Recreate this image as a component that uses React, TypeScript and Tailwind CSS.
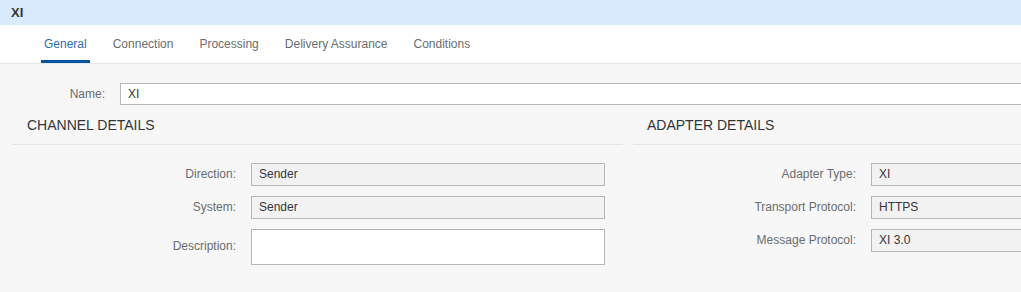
import React from "react";

const tabs = ["General", "Connection", "Processing", "Delivery Assurance", "Conditions"];

const channelRows = [
  { label: "Direction:", value: "Sender" },
  { label: "System:", value: "Sender" },
];

const adapterRows = [
  { label: "Adapter Type:", value: "XI" },
  { label: "Transport Protocol:", value: "HTTPS" },
  { label: "Message Protocol:", value: "XI 3.0" },
];

const Field: React.FC<{ label: string; value?: string; tall?: boolean; readOnly?: boolean }> = ({
  label,
  value,
  tall,
  readOnly = true,
}) => {
  return (
    <div className="flex items-start">
      <div
        className={`w-[223px] shrink-0 text-right text-[12px] text-[#6a6d70] ${
          tall ? "leading-[35px]" : "leading-[23px]"
        }`}
      >
        {label}
      </div>
      <div
        className={`ml-[15px] w-[354px] shrink-0 border border-[#b4b8bc] px-[7px] text-[12px] text-[#32363a] ${
          tall ? "h-[36px]" : "h-[23px] leading-[21px]"
        } ${readOnly ? "bg-[#f2f2f2]" : "bg-white"}`}
      >
        {value}
      </div>
    </div>
  );
};

const Section: React.FC<{ title: string; children: React.ReactNode; className?: string }> = ({
  title,
  children,
  className,
}) => {
  return (
    <div className={className}>
      <div className="border-b border-[#e5e5e5] px-[14px] pt-[12px] pb-[10px] text-[14px] leading-[17px] text-[#32363a]">
        {title}
      </div>
      <div className="flex flex-col gap-[10px] pt-[18px]">{children}</div>
    </div>
  );
};

export default function App() {
  return (
    <div
      className="h-[292px] w-[1021px] overflow-hidden bg-[#f7f7f7]"
      style={{ fontFamily: '"Liberation Sans", Arial, sans-serif' }}
    >
      <div className="flex h-[25px] items-center bg-[#d8ebfc] px-[11px] text-[13px] font-bold text-[#32363a]">
        XI
      </div>

      <div className="flex h-[39px] gap-[20px] border-b border-[#e5e5e5] bg-white pl-[41px]">
        {tabs.map((tab, i) => (
          <div
            key={tab}
            className={`flex h-[38px] items-center border-b-[3px] px-[3px] pt-[3px] text-[12px] ${
              i === 0 ? "border-[#0854a0] text-[#2f6cb0]" : "border-transparent text-[#6a6d70]"
            }`}
          >
            {tab}
          </div>
        ))}
      </div>

      <div className="flex items-center pt-[19px]">
        <div className="ml-[13px] w-[92px] text-right text-[12px] text-[#6a6d70]">Name:</div>
        <div className="ml-[15px] h-[22px] flex-1 border border-r-0 border-[#b4b8bc] bg-white px-[7px] text-[12px] leading-[20px] text-[#32363a]">
          XI
        </div>
      </div>

      <div className="flex">
        <Section title="CHANNEL DETAILS" className="ml-[13px] w-[610px] shrink-0">
          {channelRows.map((r) => (
            <Field key={r.label} label={r.label} value={r.value} />
          ))}
          <Field label="Description:" tall readOnly={false} />
        </Section>
        <Section title="ADAPTER DETAILS" className="ml-[10px] flex-1">
          {adapterRows.map((r) => (
            <Field key={r.label} label={r.label} value={r.value} />
          ))}
        </Section>
      </div>
    </div>
  );
}
